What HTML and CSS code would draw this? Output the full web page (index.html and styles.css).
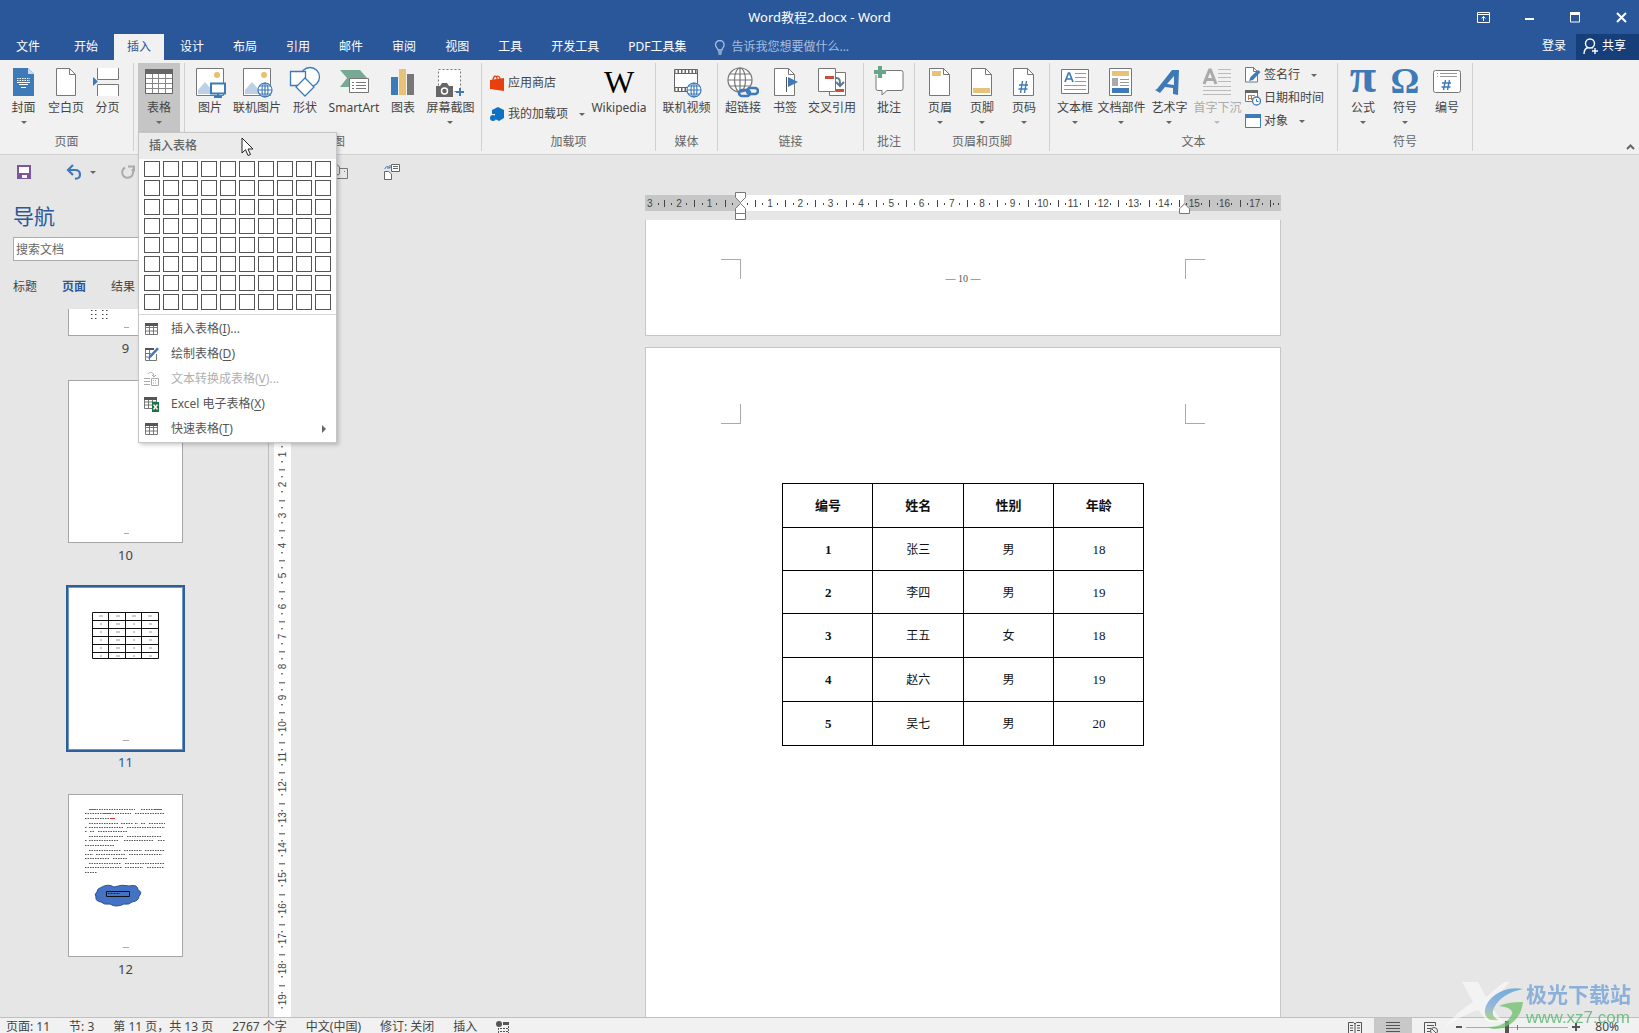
FILE: index.html
```html
<!DOCTYPE html>
<html lang="zh-CN">
<head>
<meta charset="utf-8">
<title>Word教程2.docx - Word</title>
<link rel="stylesheet" href="styles.css">
</head>
<body>
<header>
  <div class="titlebar">
    <span class="title">Word教程2.docx - Word</span>
    <div class="window-controls">
      <button type="button" aria-label="功能区显示选项"><svg width="13" height="11" viewBox="0 0 13 11" fill="none" stroke="#fff"><path d="M.5.5h12v10H.5zM.5 2.5h12M6.500 9V4.500M4.500 6.500l2-2 2 2"/></svg></button>
      <button type="button" aria-label="最小化"><svg width="13" height="11" viewBox="0 0 13 11"><path d="M2 6h9v2H2z" fill="#fff"/></svg></button>
      <button type="button" aria-label="最大化"><svg width="13" height="11" viewBox="0 0 13 11"><path d="M1.500 1v9h9V1z" fill="none" stroke="#fff"/><path d="M1 0h10v3H1z" fill="#fff"/></svg></button>
      <button type="button" aria-label="关闭"><svg width="13" height="11" viewBox="0 0 13 11"><path d="M2 1l9 9M11 1l-9 9" stroke="#fff" stroke-width="2"/></svg></button>
    </div>
  </div>
  <nav class="tabs">
    <button type="button" class="file">文件</button>
    <button type="button">开始</button>
    <button type="button" class="active">插入</button>
    <button type="button">设计</button>
    <button type="button">布局</button>
    <button type="button">引用</button>
    <button type="button">邮件</button>
    <button type="button">审阅</button>
    <button type="button">视图</button>
    <button type="button">工具</button>
    <button type="button">开发工具</button>
    <button type="button">PDF工具集</button>
    <label class="tell">
      <svg width="12" height="15" viewBox="0 0 12 15" fill="none" stroke="#a9bedd" stroke-width="1.300"><path d="M4 10C4 8 1.500 7.500 1.500 4.800a4.300 4.300 0 0 1 8.600 0C10.100 7.500 8 8 8 10zM4 12h4M4.500 14h3"/></svg>
      <input type="text" placeholder="告诉我您想要做什么..." aria-label="告诉我您想要做什么">
    </label>
    <a href="#" class="login">登录</a>
    <button type="button" class="share"><svg width="15" height="17" viewBox="0 0 15 17" fill="none" stroke="#fff" stroke-width="1.400"><circle cx="7" cy="5.500" r="4.500"/><path d="M5 9.500C2 10.500 1 13 1 16M9 9.500l1 .8M12 10v6M9 13h6"/></svg>共享</button>
  </nav>
  <div class="ribbon">
    <section class="group g-page">
      <div class="tools">
        <button type="button" class="big drop"><svg viewBox="0 0 32 32"><path d="M5 2h15l6 6v22H5z" fill="#3f7ab8"/><path d="M20 2v6h6z" fill="#c9dbee"/><path d="M9 12.500h13M9 14.500h13" stroke="#fff" stroke-dasharray="1.500 1"/><path d="M9 16.500h13M11 18.500h9M13 21.500h5" stroke="#fff"/></svg>封面</button>
        <button type="button" class="big"><svg viewBox="0 0 32 32"><path d="M6.500 2.500h13l6 6v21h-19z" fill="#fff" stroke="#777"/><path d="M19.500 2.500v6h6" fill="none" stroke="#777"/></svg>空白页</button>
        <button type="button" class="big"><svg viewBox="0 0 32 32"><path d="M5.500 2v11.500h21V2M5.500 30V18.500h21V30" fill="#fff" stroke="#777"/><path d="M1 11l5 4.500L1 20z" fill="#3f7ab8"/></svg>分页</button>
      </div>
      <h2>页面</h2>
    </section>
    <section class="group g-table">
      <div class="tools">
        <div class="menu-anchor">
          <button type="button" class="big drop pressed" aria-expanded="true"><svg viewBox="0 0 32 32"><path d="M2.500 5.500h27v22h-27z" fill="#fff" stroke="#666"/><path d="M2 3h28v5H2z" fill="#666"/><path d="M3 12.500h26M3 17.500h26M3 22.500h26M9.500 8v19M15.500 8v19M22.500 8v19" stroke="#888"/></svg>表格</button>
          <div class="menu" role="menu">
            <h3>插入表格</h3>
            <div class="picker" id="picker"></div>
            <div class="items">
              <button type="button" role="menuitem"><svg viewBox="0 0 16 16"><path d="M2.500 3.500h12v10h-12zM2 6.500h12M2 10h12M6.500 4v9M10.500 4v9" fill="none" stroke="#777"/><path d="M2 2h13v3H2z" fill="#555"/></svg>插入表格(<u>I</u>)...</button>
              <button type="button" role="menuitem"><svg viewBox="0 0 16 16"><path d="M11 3.500H2.500v11h11V8M2 7.500h6M6.500 4v10M3 11h3" fill="none" stroke="#777"/><path d="M2 2h9v2H2z" fill="#555"/><path d="M5 13l1.500-3.500L14 1.500 16 3 8 11.500z" fill="#3f7ab8"/></svg>绘制表格(<u>D</u>)</button>
              <button type="button" role="menuitem" disabled><svg viewBox="0 0 16 16"><path d="M1 7.500h6M1 10.500h6M1 13.500h6M5 3c2-3 6-2 6 3M9 4l2 2 2-2M8.500 7.500h7v7h-7z" fill="none" stroke="#aaa"/><path d="M10 9.500h4M10 12h4" stroke="#aaa" stroke-dasharray="1 1"/></svg>文本转换成表格(<u>V</u>)...</button>
              <button type="button" role="menuitem"><svg viewBox="0 0 16 16"><path d="M1.500 2.500h12v10h-12zM1 6h12M1 9h12M5.500 3v9M9.500 3v9" fill="none" stroke="#777"/><path d="M1 1h13v3H1z" fill="#555"/><path d="M9 6h7v10H9z" fill="#1e7145"/><path d="M10.500 8.500l4 5M14.500 8.500l-4 5" stroke="#fff" stroke-width="1.300"/></svg>Excel 电子表格(<u>X</u>)</button>
              <button type="button" role="menuitem" class="sub"><svg viewBox="0 0 16 16"><path d="M2.500 3.500h12v10h-12zM2 6.500h12M2 10h12M6.500 4v9M10.500 4v9" fill="none" stroke="#777"/><path d="M2 2h13v3H2z" fill="#555"/></svg>快速表格(<u>T</u>)</button>
            </div>
            <svg class="pointer" width="14" height="20" viewBox="0 0 14 20"><path d="M1 1v15l3.500-3.300L7 18.500l2.500-1L7 12h5z" fill="#fff" stroke="#222"/></svg>
          </div>
        </div>
      </div>
    </section>
    <section class="group g-illus">
      <div class="tools">
        <button type="button" class="big"><svg viewBox="0 0 32 32"><path d="M2.500 2.500h27v27h-27z" fill="#fff" stroke="#777"/><path d="M4 28v-4l7-8 8 9v3z" fill="#bcd0e6"/><circle cx="23" cy="9" r="3" fill="#e9bf6b"/><path d="M17 17.500h14v10H17z" fill="#fff" stroke="#3f7ab8" stroke-width="2"/><path d="M24 28v3M20 31h8" stroke="#3f7ab8" stroke-width="2"/></svg>图片</button>
        <button type="button" class="big"><svg viewBox="0 0 32 32"><path d="M2.500 2.500h27v27h-27z" fill="#fff" stroke="#777"/><path d="M4 28v-4l7-8 8 9v3z" fill="#bcd0e6"/><circle cx="23" cy="9" r="3" fill="#e9bf6b"/><g fill="none" stroke="#3f7ab8" stroke-width="1.200"><circle cx="24" cy="24" r="7" fill="#fff"/><ellipse cx="24" cy="24" rx="3" ry="7"/><path d="M17 24h14M18.500 20h11M18.500 28h11M24 17v14"/></g></svg>联机图片</button>
        <button type="button" class="big"><svg viewBox="0 0 32 32" fill="#fff" stroke="#3f7ab8" stroke-width="1.300"><circle cx="21" cy="11" r="9.500"/><path d="M1.500 5.500h15v14h-15z"/><path d="M16 12l9 9-9 9-9-9z"/></svg>形状</button>
        <button type="button" class="big"><svg viewBox="0 0 32 32"><path d="M2 4h20l7 8-7 9H2l7-9z" fill="#77a995"/><path d="M11.500 12.500h19v14h-19z" fill="#fff" stroke="#777"/><path d="M14 16.500h2M18 16.500h10M14 19.500h2M18 19.500h10M14 22.500h2M18 22.500h10" stroke="#777"/></svg>SmartArt</button>
        <button type="button" class="big"><svg viewBox="0 0 32 32"><path d="M4 11h7v18H4z" fill="#3f7ab8"/><path d="M12 3h7v26h-7z" fill="#e9c27a"/><path d="M20 8h7v21h-7z" fill="#777"/></svg>图表</button>
        <button type="button" class="big drop"><svg viewBox="0 0 32 32"><path d="M4.500 3.500h22v22h-22z" fill="#fff" stroke="#777" stroke-dasharray="2 2"/><path d="M2 20h4l2-3h5l2 3h4v11H2z" fill="#666"/><circle cx="10.500" cy="25" r="3" fill="#666" stroke="#fff" stroke-width="1.500"/><path d="M26 22v8M22 26h8" stroke="#3f7ab8" stroke-width="2"/></svg>屏幕截图</button>
      </div>
      <h2>插图</h2>
    </section>
    <section class="group g-addin">
      <div class="tools">
        <div class="small-list wide">
          <button type="button" class="small"><svg viewBox="0 0 16 16"><path d="M1 5l14-2v13L1 14z" fill="#e8400c"/><path d="M4 6C4 0 8 0 8 4M7 2c2-2 4 0 4 2" fill="none" stroke="#e8400c" stroke-width="1.300"/></svg>应用商店</button>
          <button type="button" class="small drop"><svg viewBox="0 0 16 16"><path d="M3 4l6-3 6 3v8l-5 3-4-2V8H3z" fill="#0e72c4"/><circle cx="4" cy="12" r="3" fill="#0e72c4"/></svg>我的加载项</button>
        </div>
        <button type="button" class="big"><span class="wiki">W</span>Wikipedia</button>
      </div>
      <h2>加载项</h2>
    </section>
    <section class="group g-media">
      <div class="tools">
        <button type="button" class="big"><svg viewBox="0 0 32 32"><path d="M4.500 3.500h23v22h-23z" fill="#fff" stroke="#666"/><path d="M4 5.500h24M4 23.500h24" stroke="#666" stroke-width="3" stroke-dasharray="1.500 2"/><path d="M4 7.500h24M4 21.500h24" stroke="#666"/><g fill="none" stroke="#3f7ab8" stroke-width="1.200"><circle cx="24" cy="24" r="7" fill="#fff"/><ellipse cx="24" cy="24" rx="3" ry="7"/><path d="M17 24h14M18.500 20h11M18.500 28h11M24 17v14"/></g></svg>联机视频</button>
      </div>
      <h2>媒体</h2>
    </section>
    <section class="group g-link">
      <div class="tools">
        <button type="button" class="big"><svg viewBox="0 0 32 32" fill="none"><g stroke="#777" stroke-width="1.200"><circle cx="13" cy="14" r="12" fill="#fff"/><ellipse cx="13" cy="14" rx="5.500" ry="12"/><path d="M1 14h24M13 2v24M3 8h20M3 20h20"/></g><g stroke="#3f7ab8" stroke-width="2.600"><rect x="12" y="24" width="11" height="6" rx="3"/><rect x="20" y="22" width="11" height="6" rx="3"/></g></svg>超链接</button>
        <button type="button" class="big"><svg viewBox="0 0 32 32"><path d="M5.500 2.500h14l6 6v21h-20z" fill="#fff" stroke="#777"/><path d="M19.500 2.500v6h6" fill="none" stroke="#777"/><path d="M17.500 11v15" stroke="#555"/><path d="M19 11l10 5-10 5z" fill="#3f7ab8"/></svg>书签</button>
        <button type="button" class="big"><svg viewBox="0 0 32 32"><path d="M13.500 6.500h16v23h-16z" fill="#fff" stroke="#777"/><path d="M2.500 2.500h17v23h-17z" fill="#fff" stroke="#777"/><path d="M9 11.500h9M20 24.500h8" stroke="#c94f3b" stroke-width="3"/><path d="M20 12c4 0 4 2 4 7M20 16l4 4 4-4" fill="none" stroke="#5a7a8c" stroke-width="2"/></svg>交叉引用</button>
      </div>
      <h2>链接</h2>
    </section>
    <section class="group g-comment">
      <div class="tools">
        <button type="button" class="big"><svg viewBox="0 0 32 32"><path d="M5 4.500h23q2 0 2 2v16q0 2-2 2H14L9 29v-4.500H5q-2 0-2-2v-16q0-2 2-2z" fill="#fff" stroke="#777"/><path d="M7 0v12M1 6h12" stroke="#f1f1f1" stroke-width="6"/><path d="M7 0v12M1 6h12" stroke="#67a58b" stroke-width="4"/></svg>批注</button>
      </div>
      <h2>批注</h2>
    </section>
    <section class="group g-header">
      <div class="tools">
        <button type="button" class="big drop"><svg viewBox="0 0 32 32"><path d="M5.500 2.500h14l6 6v21h-20z" fill="#fff" stroke="#777"/><path d="M19.500 2.500v6h6" fill="none" stroke="#777"/><path d="M8 5h9v5H8z" fill="#e9c27a"/></svg>页眉</button>
        <button type="button" class="big drop"><svg viewBox="0 0 32 32"><path d="M5.500 2.500h14l6 6v21h-20z" fill="#fff" stroke="#777"/><path d="M19.500 2.500v6h6" fill="none" stroke="#777"/><path d="M7 22h17v5H7z" fill="#e9c27a"/></svg>页脚</button>
        <button type="button" class="big drop"><svg viewBox="0 0 32 32"><path d="M5.500 2.500h14l6 6v21h-20z" fill="#fff" stroke="#777"/><path d="M19.500 2.500v6h6" fill="none" stroke="#777"/><path d="M14.500 15l-2 12M18.500 15l-2 12M11 19h9M10.500 23h9" stroke="#3f7ab8" stroke-width="1.400"/></svg>页码</button>
      </div>
      <h2>页眉和页脚</h2>
    </section>
    <section class="group g-text">
      <div class="tools">
        <button type="button" class="big drop"><svg viewBox="0 0 32 32"><path d="M2.500 3.500h27v24h-27z" fill="#fff" stroke="#777"/><path d="M6 16l3.500-9h1L14 16M7 13h6" fill="none" stroke="#3f7ab8" stroke-width="1.700"/><path d="M16 7.500h11M16 11.500h11M16 15.500h11M5 19.500h22M5 23.500h22" stroke="#999"/></svg>文本框</button>
        <button type="button" class="big drop"><svg viewBox="0 0 32 32"><path d="M4.500 2.500h22v27h-22z" fill="#fff" stroke="#777"/><path d="M7 5h17v5H7z" fill="#e9c27a"/><path d="M7 12h6v8H7z" fill="#aaa"/><path d="M15 13.500h9M15 16.500h9M15 19.500h9" stroke="#999"/><path d="M7 22h17v5H7z" fill="#3f7ab8"/></svg>文档部件</button>
        <button type="button" class="big drop"><svg viewBox="0 0 32 32"><path d="M2 24l5 3 5-6 8 1v6l5 1 1-25h-7L4 23zM14 18l7-8v9z" fill="#3f7ab8" fill-rule="evenodd"/></svg>艺术字</button>
        <button type="button" class="big drop" disabled><svg viewBox="0 0 32 32" fill="none" stroke="#aaa"><path d="M3 18L8.500 4h1L15 18M5 13.500h8" stroke-width="3"/><path d="M17 3.500h13M17 7.500h13M17 11.500h13M17 15.500h13M2 20.500h28M2 24.500h28M2 28.500h28" stroke="#bbb"/></svg>首字下沉</button>
        <div class="small-list">
          <button type="button" class="small drop"><svg viewBox="0 0 16 16"><path d="M.5.500h8l4 4v10.500H.5z" fill="#fff" stroke="#777"/><path d="M8.500.5v4h4" fill="none" stroke="#777"/><path d="M4 14l1.500-4L13 3l2.500 2-7.500 8z" fill="#3f7ab8"/></svg>签名行</button>
          <button type="button" class="small"><svg viewBox="0 0 16 16"><path d="M.5.500h12v11H.5z" fill="#fff" stroke="#777"/><path d="M0 0h13v3H0z" fill="#666"/><path d="M3 5.500h7M3 8.500h5M3.500 5v5M6.500 5v5" stroke="#c77c4b"/><circle cx="11.500" cy="11" r="4" fill="#fff" stroke="#3f7ab8" stroke-width="1.300"/><path d="M11.500 9v2.500h2" fill="none" stroke="#3f7ab8"/></svg>日期和时间</button>
          <button type="button" class="small drop"><svg viewBox="0 0 16 16"><path d="M.5 1.500h15v13H.5z" fill="#fff" stroke="#3f7ab8"/><path d="M0 1h16v4H0z" fill="#3f7ab8"/></svg>对象</button>
        </div>
      </div>
      <h2>文本</h2>
    </section>
    <section class="group g-symbol">
      <div class="tools">
        <button type="button" class="big drop"><span class="glyph pi">π</span>公式</button>
        <button type="button" class="big drop"><span class="glyph">Ω</span>符号</button>
        <button type="button" class="big"><svg viewBox="0 0 32 32"><rect x="2.500" y="4.500" width="27" height="22" rx="2" fill="#fff" stroke="#777"/><path d="M6 7.500h1M9 7.500h17M6 10.500h1M9 10.500h17" stroke="#999"/><path d="M14.500 14l-2 10M18.500 14l-2 10M11 17h9M10.500 21h9" stroke="#3f7ab8" stroke-width="1.400"/></svg>编号</button>
      </div>
      <h2>符号</h2>
    </section>
    <button type="button" class="collapse" aria-label="折叠功能区"><svg width="9" height="6" viewBox="0 0 9 6"><path d="M1 5l3.500-3.500L8 5" fill="none" stroke="#666" stroke-width="2"/></svg></button>
  </div>
</header>
<div class="quick">
  <button type="button" aria-label="保存"><svg viewBox="0 0 16 16"><path d="M2 2h12v12H2z" fill="#fff" stroke="#7d55a0" stroke-width="2"/><path d="M2 9h12v5H2z" fill="#7d55a0"/><path d="M6 11h5v3H6z" fill="#fff"/></svg></button>
  <button type="button" class="undo drop" aria-label="撤消"><svg viewBox="0 0 16 16"><path d="M2 6h7q5 0 5 4.500T9 14.500M7 1L2 6l5 5" fill="none" stroke="#3f7ab8" stroke-width="2.200"/></svg></button>
  <button type="button" aria-label="重复" disabled><svg viewBox="0 0 16 16"><path d="M5 3.500A5.500 5.500 0 1 0 12 5M8 2.500h6v5" fill="none" stroke="#aaa" stroke-width="2"/></svg></button>
  <button type="button" class="mail" aria-label="信封"><svg viewBox="0 0 16 16" fill="none" stroke="#777"><path d="M8 4.500h7.500v10H3M12 7.500h1"/><path d="M4.500 4v6q1.500 2 3 0V3Q5-1 2 3v8"/></svg></button>
  <button type="button" aria-label="交叉引用"><svg viewBox="0 0 16 16" fill="none"><path d="M7.500.5h8v7h-8zM9 2.500h5M9 4.500h5M.5 7.500h4l3 2.500v5.500h-7z" fill="#fff" stroke="#666"/><path d="M1 5c0-3 4-3 5-1M6 1v3H3" stroke="#3f7ab8"/></svg></button>
</div>
<div class="workspace">
  <aside class="nav-pane">
    <h2>导航</h2>
    <input type="search" placeholder="搜索文档" aria-label="搜索文档">
    <div class="nav-tabs"><button type="button">标题</button><button type="button" class="on">页面</button><button type="button">结果</button></div>
    <div class="thumbs">
      <figure><div class="sheet tail"><svg viewBox="0 0 113 26"><path d="M22 1.500h8M33 1.500h8M22 5.500h8M33 5.500h8M22 9.500h8M33 9.500h8" stroke="#444" stroke-width="1" stroke-dasharray="1.500 2.500"/><path d="M55 18.500h5" stroke="#aaa"/></svg></div><figcaption>9</figcaption></figure>
      <figure><div class="sheet"><svg viewBox="0 0 113 161"><path d="M55 152.500h5" stroke="#aaa"/></svg></div><figcaption>10</figcaption></figure>
      <figure class="current"><div class="sheet"><svg viewBox="0 0 113 161"><path d="M23.500 24.500h66v46h-66zM23.500 32.500h66M23.500 40.500h66M23.500 48.500h66M23.500 56.500h66M23.500 64.500h66M39.500 24v46M56.500 24v46M72.500 24v46" fill="none" stroke="#111"/><path d="M30 28h4M47 28h4M63 28h4M79 28h4M31 36h2M47 36h4M64 36h2M80 36h3M31 44h2M47 44h4M64 44h2M80 44h3M31 52h2M47 52h4M64 52h2M80 52h3M31 60h2M47 60h4M64 60h2M80 60h3M31 68h2M47 68h4M64 68h2M80 68h3" stroke="#999" stroke-width="1"/><path d="M54 152.500h6" stroke="#aaa"/></svg></div><figcaption>11</figcaption></figure>
      <figure><div class="sheet"><svg viewBox="0 0 113 161"><g fill="none" stroke="#555" stroke-dasharray="1.500 1"><path d="M20 14.500h46M72 14.500h21M16 18.500h46M66 18.500h30M16 23.500h25M20 28.500h29M52 28.500h12M66 28.500h3M72 28.500h5M80 28.500h16M16 32.500h2M20 32.500h35M58 32.500h38M16 36.500h2M21 36.500h5M29 36.500h30M20 41.500h34M58 41.500h35M16 45.500h2M20 45.500h30M55 45.500h30M89 45.500h7M16 50.500h30M20 55.500h32M55 55.500h18M76 55.500h20M16 59.500h8M27 59.500h30M60 59.500h33M16 63.500h25M44 63.500h15M20 68.500h32M56 68.500h40M16 72.500h37M56 72.500h18M78 72.500h17M16 77.500h12"/><path d="M20 14.500h7M86 14.500h6M35 18.500h6M41 23.500h5" stroke="#e33" stroke-dasharray="none"/></g><path d="M31 93q8-5 14-1 8-3 15-1 9-2 9 4 5 2 1 6 0 5-7 6-3 3-8 2-8 4-14 0-6 1-9-2-6-1-5-5-2-3 1-5 0-3 3-4z" fill="#4472c4" stroke="#2f528f"/><path d="M37.500 96.500h23v5h-23z" fill="none" stroke="#111"/><path d="M39 98.500h12" stroke="#223" stroke-dasharray="1 .5"/><path d="M54 152.500h6" stroke="#aaa"/></svg></div><figcaption>12</figcaption></figure>
    </div>
  </aside>
  <div class="v-ruler"><div class="v-scale"><span>1</span><span>2</span><span>3</span><span>4</span><span>5</span><span>6</span><span>7</span><span>8</span><span>9</span><span>10</span><span>11</span><span>12</span><span>13</span><span>14</span><span>15</span><span>16</span><span>17</span><span>18</span><span>19</span></div></div>
  <main class="document">
    <div class="h-ruler">
      <span class="start">3</span>
      <div class="h-scale"><span>2</span><span>1</span><span></span><span>1</span><span>2</span><span>3</span><span>4</span><span>5</span><span>6</span><span>7</span><span>8</span><span>9</span><span>10</span><span>11</span><span>12</span><span>13</span><span>14</span><span>15</span><span>16</span><span>17</span></div>
      <span class="end"></span>
      <svg class="indent-left" width="11" height="28" viewBox="0 0 11 28" fill="#fff" stroke="#777"><path d="M.5.500h10v5l-5 5-5-5zM5.500 11.500l5 5v5H.5v-5zM.5 21.500h10v6H.5z"/></svg>
      <svg class="indent-right" width="11" height="11" viewBox="0 0 11 11" fill="#fff" stroke="#777"><path d="M5.500.8l5 5v4.700H.5V5.800z"/></svg>
    </div>
    <section class="page first"><div class="corners top"><i></i><i></i></div><p>— 10 —</p></section>
    <section class="page second">
      <div class="corners"><i></i><i></i></div>
      <table>
        <thead><tr><th>编号</th><th>姓名</th><th>性别</th><th>年龄</th></tr></thead>
        <tbody>
          <tr><th>1</th><td>张三</td><td>男</td><td class="n">18</td></tr>
          <tr><th>2</th><td>李四</td><td>男</td><td class="n">19</td></tr>
          <tr><th>3</th><td>王五</td><td>女</td><td class="n">18</td></tr>
          <tr><th>4</th><td>赵六</td><td>男</td><td class="n">19</td></tr>
          <tr><th>5</th><td>吴七</td><td>男</td><td class="n">20</td></tr>
        </tbody>
      </table>
    </section>
  </main>
</div>
<footer class="status">
  <span>页面: 11</span><span>节: 3</span><span>第 11 页，共 13 页</span><span>2767 个字</span><span>中文(中国)</span><span>修订: 关闭</span><span>插入</span>
  <svg width="14" height="14" viewBox="0 0 14 14"><circle cx="3" cy="3" r="3" fill="#555"/><path d="M7 1h6v3H7z" fill="#555"/><path d="M2.500 7v7M12.500 5v9M4 7.500h8M4 10.500h8M4 13.500h8" stroke="#555" stroke-dasharray="2 1"/></svg>
  <div class="views">
    <button type="button" aria-label="阅读视图"><svg width="14" height="14" viewBox="0 0 14 14" fill="none" stroke="#555"><path d="M7 3L5.500 1.500h-5v11h5L7 14l1.500-1.500h5v-11h-5zM7 3v11M2 4.500h3M2 7h3M2 9.500h3M9 4.500h3M9 7h3M9 9.500h3"/></svg></button>
    <button type="button" class="on" aria-label="页面视图"><svg width="14" height="14" viewBox="0 0 14 14" stroke="#555"><path d="M0 1.500h14M0 4.500h14M0 7.500h14M0 10.500h14M0 13.500h14"/></svg></button>
    <button type="button" aria-label="Web 版式"><svg width="14" height="14" viewBox="0 0 14 14" fill="none" stroke="#555"><path d="M11.500 5V1.500H.5v12H6M3 4.500h7M3 7.500h4M3 10.500h3"/><circle cx="10" cy="10" r="3.500"/><path d="M8 8l4 4"/></svg></button>
  </div>
  <div class="zoom">
    <button type="button" aria-label="缩小"><svg width="6" height="6" viewBox="0 0 6 6"><path d="M0 3h6" stroke="#555" stroke-width="2"/></svg></button>
    <input type="range" min="0" max="100" value="40" aria-label="显示比例">
    <button type="button" aria-label="放大"><svg width="8" height="8" viewBox="0 0 8 8"><path d="M0 4h8M4 0v8" stroke="#555" stroke-width="2"/></svg></button>
    <span>80%</span>
  </div>
</footer>
<div class="watermark">
  <svg width="80" height="50" viewBox="0 0 80 50">
    <defs><linearGradient id="swoosh" x1="0" y1="0" x2="0" y2="1"><stop offset="0" stop-color="#4f9bd8"/><stop offset=".6" stop-color="#7fa8d8"/><stop offset="1" stop-color="#9ad05f"/></linearGradient></defs>
    <path d="M18 2h16l8 15L60 2h6L45 24l14 18H44L34 30Q16 36 0 48q12-16 29-26z" fill="#fff" opacity=".6"/>
    <path d="M79 9C58 5 40 20 41 33q1 9 14 7-10-4-4-14Q59 13 79 9z" fill="url(#swoosh)" opacity=".9"/>
    <path d="M55 26q8-4 24-4-2 18-18 25-12 4-17 0 18 0 24-13 2-6-13-8z" fill="#6fc06c" opacity=".9"/>
  </svg>
  <div><strong>极光下载站</strong><span>www.xz7.com</span></div>
</div>
<script src="script.js"></script>
</body>
</html>
```
FILE: script.js
```js
const picker = document.getElementById('picker');
for (let row = 1; row <= 8; row++) {
  for (let col = 1; col <= 10; col++) {
    const cell = document.createElement('button');
    cell.type = 'button';
    cell.setAttribute('aria-label', col + 'x' + row + ' 表格');
    picker.append(cell);
  }
}
```
FILE: styles.css
```css
* { box-sizing: border-box; }
body {
  margin: 0; height: 100vh; overflow: hidden;
  display: flex; flex-direction: column;
  background: #e6e6e6; color: #444;
  font: 12px/18px "Noto Sans", "Noto Sans CJK SC", sans-serif;
}
button, input { font: inherit; color: inherit; border: 0; background: none; padding: 0; margin: 0; }
h2, h3, p, figure { margin: 0; font-weight: 400; font-size: 12px; }
svg { display: block; flex: none; }

.titlebar { height: 34px; background: #2a579a; color: #fff; display: grid; grid-template-columns: 1fr auto 1fr; align-items: center; }
.title { grid-column: 2; font-size: 13px; }
.window-controls { justify-self: end; display: flex; }
.window-controls button { width: 46px; height: 32px; display: grid; place-items: center; }
.window-controls button:last-child { width: 41px; padding-left: 5px; }

.tabs { height: 26px; background: #2a579a; color: #fff; display: flex; gap: 3px; align-items: stretch; }
.tabs > button { padding: 0 13px; white-space: nowrap; }
.tabs > .file { padding: 0 18px 0 16px; }
.tabs > .active { background: #f1f1f1; color: #2a579a; }
.tell { display: flex; align-items: center; gap: 5px; margin-left: 12px; margin-right: auto; }
.tell input { width: 160px; }
.tell input::placeholder { color: #a9bedd; opacity: 1; }
.login { color: #fff; text-decoration: none; line-height: 24px; margin-right: 7px; }
.tabs > .share { background: #163f7a; display: flex; align-items: center; gap: 4px; padding: 0 13px 2px 7px; }

.ribbon { position: relative; height: 95px; background: #f1f1f1; border-bottom: 1px solid #d0d0d0; display: flex; }
.group { margin: 3px 0 3px; border-right: 1px solid #d0d0d0; display: flex; flex-direction: column; justify-content: space-between; text-align: center; }
.group > h2 { color: #666; }
.tools { display: grid; }
.big { display: flex; flex-direction: column; align-items: center; height: 68px; padding-top: 3px; white-space: nowrap; justify-self: center; }
.big svg, .wiki, .glyph { width: 32px; height: 32px; margin-bottom: 1px; }
.drop::after { content: ""; border: 3px solid transparent; border-top-color: #666; border-bottom: 0; }
.big.drop::after { margin-top: 4px; }
.big[disabled] { color: #aaa; }
.big[disabled]::after { border-top-color: #bbb; }
.wiki { font: 32px/32px "Liberation Serif", serif; color: #000; }
.glyph { font: bold 36px/30px "Liberation Serif", serif; color: #3f7ab8; display: flex; justify-content: center; }
.glyph.pi { font-size: 48px; line-height: 20px; }
.small-list { display: grid; align-content: start; gap: 5px; padding: 3px 0 0 3px; }
.small { display: flex; align-items: center; gap: 3px; white-space: nowrap; height: 18px; }
.small svg { width: 16px; height: 16px; }
.small.drop::after { margin-left: 8px; }
.small-list.wide { gap: 13px; padding: 11px 0 0 7px; }

.g-page { width: 134px; }
.g-page .tools { grid-template-columns: 39px 46px 37px; padding-left: 4px; }
.g-table { width: 51px; }
.g-table .tools { padding-left: 4px; grid-template-columns: 42px; }
.g-illus { width: 297px; }
.g-illus .tools { grid-template-columns: 40px 54px 42px 56px 42px 53px; padding-left: 5px; }
.g-addin { width: 174px; }
.g-addin .tools { grid-template-columns: 105px 64px; }
.g-media { width: 62px; }
.g-link { width: 146px; }
.g-link .tools { grid-template-columns: 42px 42px 52px; padding-left: 4px; }
.g-comment { width: 51px; }
.g-header { width: 135px; }
.g-header .tools { grid-template-columns: repeat(3, 42px); padding-left: 4px; }
.g-text { width: 288px; }
.g-text .tools { grid-template-columns: 44px 49px 47px 49px auto; padding-left: 3px; }
.g-symbol { width: 135px; }
.g-symbol .tools { grid-template-columns: repeat(3, 42px); padding-left: 4px; }
.collapse { margin: auto 4px 4px auto; }

.menu-anchor { position: relative; }
.pressed { width: 42px; height: 70px; background: #c5c5c5; }
.menu { position: absolute; z-index: 5; top: 69px; left: 0; width: 199px; background: #fff; border: 1px solid #c6c6c6; box-shadow: 2px 2px 4px #0003; text-align: left; color: #555; }
.menu h3 { height: 26px; line-height: 26px; padding-left: 10px; background: #ebebeb; font-weight: 500; font-size: 12px; color: #666; }
.picker { display: grid; grid-template-columns: repeat(10, 16px); gap: 3px; padding: 2px 5px 4px; border-bottom: 1px solid #d8d8d8; }
.picker button { height: 16px; border: 1px solid #555; background: #fff; }
.items { display: grid; padding: 1px 0; }
.items button { display: flex; align-items: center; height: 25px; padding-left: 4px; white-space: pre; }
.items svg { width: 16px; height: 16px; margin-right: 12px; }
.items [disabled] { color: #b0b0b0; }
.items u { text-underline-offset: 2px; }
.sub::after { content: ""; margin: 0 10px 0 auto; border: 4px solid transparent; border-left-color: #666; border-right: 0; }
.pointer { position: absolute; left: 102px; top: 4px; }

.quick { height: 34px; flex: none; display: flex; align-items: center; padding-left: 16px; }
.quick button { display: flex; align-items: center; gap: 8px; width: 16px; }
.quick svg { width: 16px; height: 16px; }
.quick .undo { margin-left: 34px; width: 54px; }
.quick .mail { margin: 0 36px 0 196px; }

.workspace { flex: 1; min-height: 0; display: flex; }
.nav-pane { flex: none; width: 269px; border-right: 1px solid #bdbdbd; display: flex; flex-direction: column; padding: 12px 13px 0; }
.nav-pane h2 { font-size: 21px; line-height: 30px; color: #2b579a; }
.nav-pane input { height: 24px; margin-top: 6px; border: 1px solid #ababab; background: #fff; padding: 0 2px; }
.nav-pane input::placeholder { color: #666; opacity: 1; }
.nav-tabs { display: flex; gap: 25px; margin-top: 17px; }
.nav-tabs .on { color: #2b579a; font-weight: 700; }
.thumbs { margin-top: 13px; padding-right: 17px; flex: 1; min-height: 0; overflow: hidden; display: grid; justify-items: center; align-content: start; gap: 20px; }
.thumbs figure { text-align: center; font-size: 13px; }
.sheet { width: 115px; height: 163px; border: 1px solid #a6a6a6; background: #fff; }
.sheet.tail { height: 27px; border-top: 0; }
.thumbs figcaption { line-height: 18px; padding-top: 3px; height: 24px; }
.current .sheet { outline: 2px solid #2f5f9a; border-color: #6f97c4; }
.current figcaption { color: #2b579a; }

.v-ruler { flex: none; width: 17px; margin: 235px 0 0 5px; padding-top: 15px; background: #fff; overflow: hidden; font: 10px/17px "Liberation Sans", sans-serif; }
.v-scale { height: 576px; display: flex; flex-direction: column; }
.v-scale span { flex: 1; writing-mode: vertical-rl; transform: rotate(180deg); text-align: center;
  background: linear-gradient(#444, #444) 50% 100% / 6px 1px no-repeat, linear-gradient(#444, #444) 50% 25% / 2px 1px no-repeat, linear-gradient(#444, #444) 50% 75% / 2px 1px no-repeat; }

.document { flex: 1; display: flex; flex-direction: column; align-items: center; padding: 6px 4px 0 0; overflow: hidden; }
.h-ruler { flex: none; position: relative; width: 636px; height: 16px; display: flex; font: 10px/18px "Liberation Sans", sans-serif; background: linear-gradient(90deg, #c6c6c6 96px, #fff 96px 539px, #c6c6c6 539px); }
.h-scale { flex: none; width: 606px; display: flex; }
.h-scale span { flex: 1; text-align: center; }
.h-scale span, .end { background: linear-gradient(#444, #444) 0 60% / 1px 7px no-repeat, linear-gradient(#444, #444) 25% 60% / 1px 2px no-repeat, linear-gradient(#444, #444) 75% 60% / 1px 2px no-repeat; }
.start { width: 19px; padding-left: 2px; background: linear-gradient(#444, #444) 13px 60% / 1px 2px no-repeat; }
.end { flex: 1; }
.indent-left { position: absolute; left: 90px; top: -3px; }
.indent-right { position: absolute; left: 534px; top: 8px; }

.page { flex: none; width: 636px; background: #fff; border: 1px solid #c6c6c6; padding: 0 75px; }
.page.first { margin-top: 9px; height: 116px; border-top: 0; padding-top: 39px; }
.page.second { margin-top: 11px; height: 898px; padding-top: 56px; }
.corners { display: flex; justify-content: space-between; }
.corners i { width: 20px; height: 20px; border: solid #aaa; border-width: 0 1px 1px 0; }
.corners i + i { border-width: 0 0 1px 1px; }
.corners.top i { border-width: 1px 1px 0 0; }
.corners.top i + i { border-width: 1px 0 0 1px; }
.page p { font: 10px/12px "Liberation Serif", serif; text-align: center; margin-top: -6px; color: #555; }
table { width: 362px; margin: 59px auto 0; border-collapse: collapse; table-layout: fixed; color: #111; text-align: center; }
th, td { height: 44px; padding: 1px 0 0 1px; border: 1px solid #000; }
tbody tr:nth-child(2) > *, tbody tr:nth-child(1) > * { height: 43px; }
th, .n { font-family: "Liberation Serif", "Noto Sans CJK SC", serif; font-size: 13px; }

.status { flex: none; height: 16px; overflow: hidden; border-top: 1px solid #c0c0c0; background: #f1f1f1; display: flex; padding-left: 6px; white-space: nowrap; }
.status > span { margin-right: 19px; }
.status > svg { margin-top: 3px; }
.views { display: flex; margin-left: auto; }
.views button { width: 38px; height: 18px; display: flex; justify-content: center; padding-top: 3px; }
.views .on { background: #c8c8c8; }
.zoom { display: flex; align-items: center; gap: 4px; margin-left: 6px; padding-right: 20px; height: 18px; }
.zoom input { appearance: none; width: 102px; height: 14px; background: linear-gradient(#777, #777) 50% 50% / 1px 5px no-repeat, linear-gradient(#aaa, #aaa) 0 50% / 100% 1px no-repeat; }
.zoom input::-webkit-slider-thumb { appearance: none; width: 4px; height: 12px; background: #555; }
.zoom span { margin-left: 11px; }

.watermark { position: fixed; right: 8px; bottom: 3px; z-index: 9; display: flex; pointer-events: none; opacity: .85; }
.watermark div { display: flex; flex-direction: column; margin-left: 2px; }
.watermark strong { font-size: 21px; line-height: 28px; color: #7ba6d6; }
.watermark span { font: 17px/20px "Liberation Sans", sans-serif; color: #5fb877; }
```
